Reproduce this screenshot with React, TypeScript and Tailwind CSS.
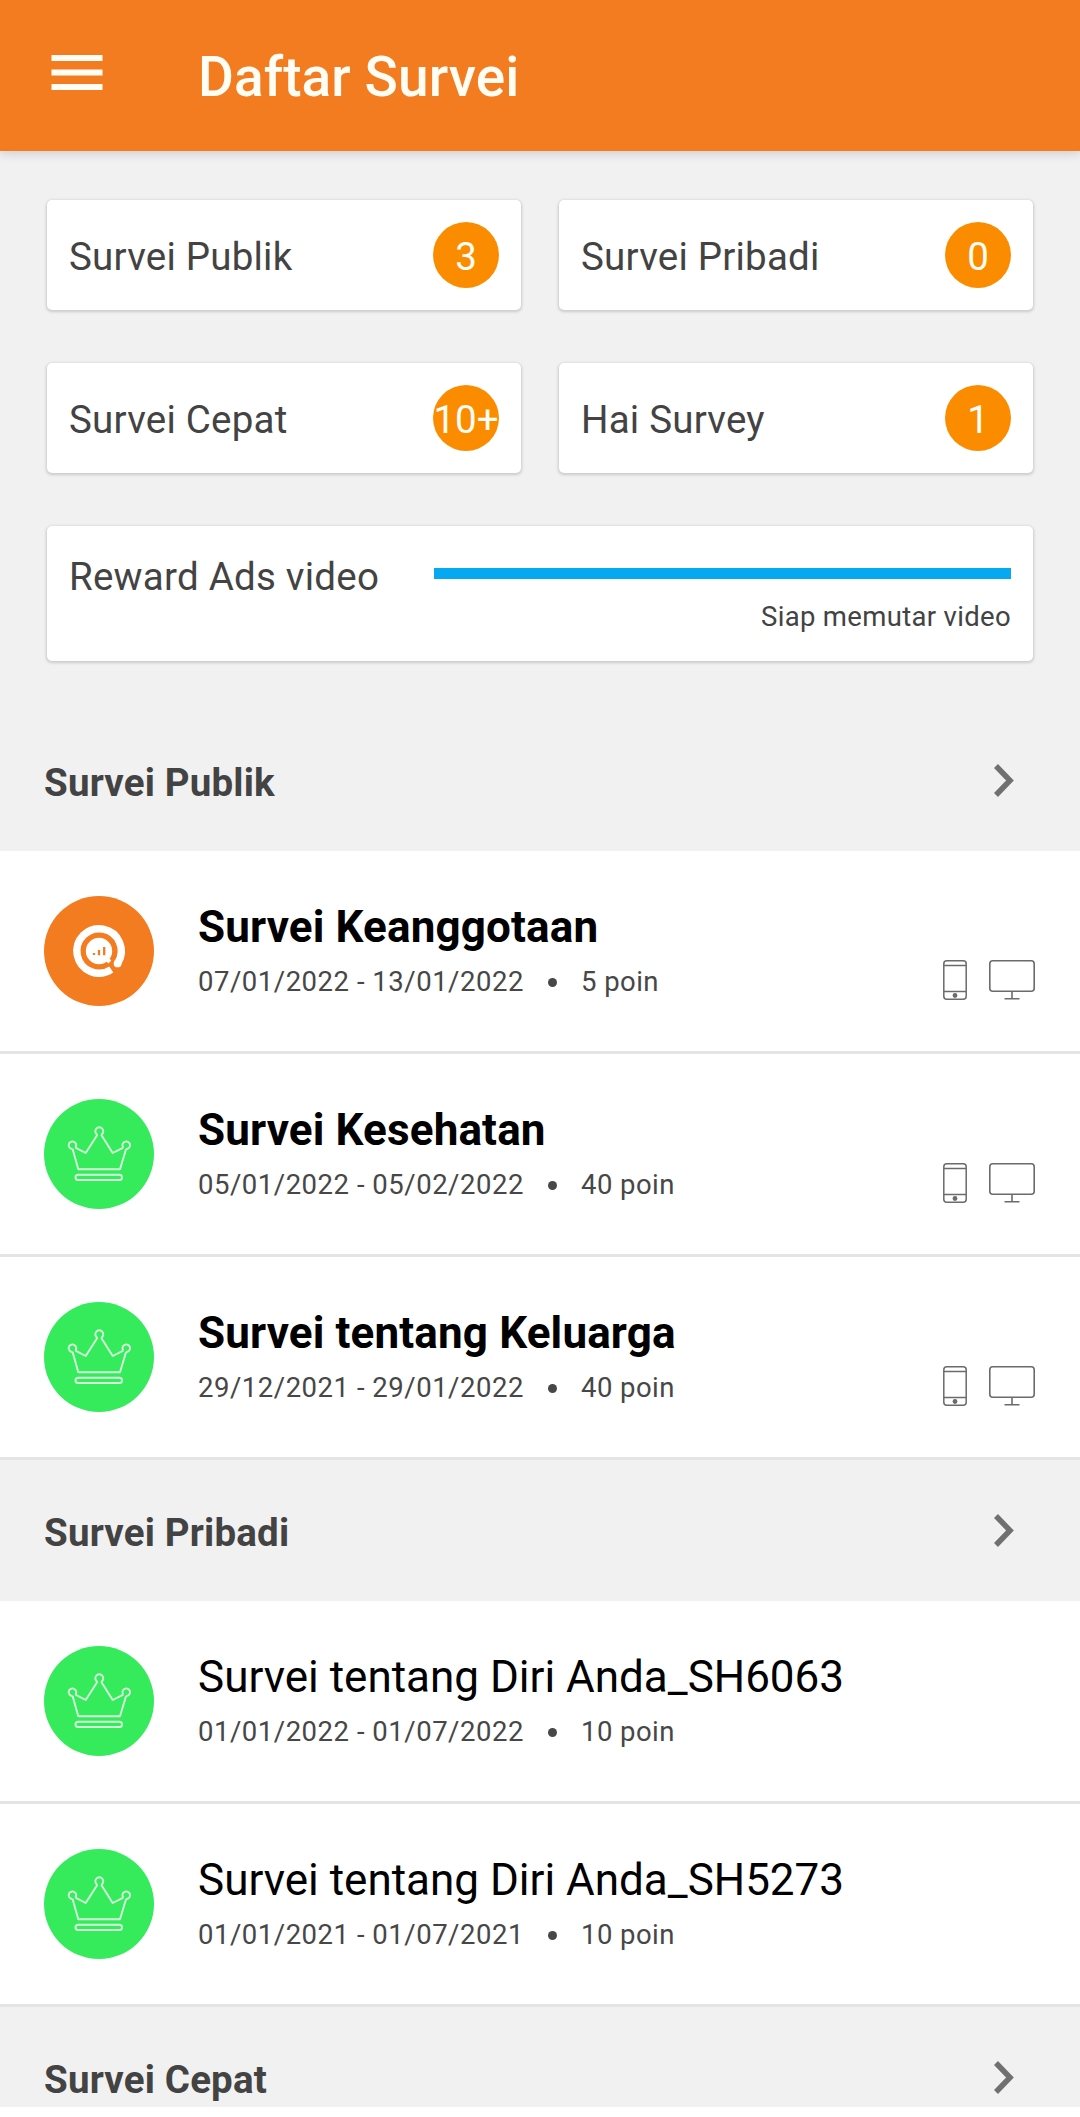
import React from 'react';

type Survey = { title: string; dates: string; points: string; member?: boolean; devices?: boolean };

const counters = [
  { label: 'Survei Publik', count: '3' },
  { label: 'Survei Pribadi', count: '0' },
  { label: 'Survei Cepat', count: '10+' },
  { label: 'Hai Survey', count: '1' },
];

const publicSurveys: Survey[] = [
  { title: 'Survei Keanggotaan', dates: '07/01/2022 - 13/01/2022', points: '5 poin', member: true, devices: true },
  { title: 'Survei Kesehatan', dates: '05/01/2022 - 05/02/2022', points: '40 poin', devices: true },
  { title: 'Survei tentang Keluarga', dates: '29/12/2021 - 29/01/2022', points: '40 poin', devices: true },
];

const privateSurveys: Survey[] = [
  { title: 'Survei tentang Diri Anda_SH6063', dates: '01/01/2022 - 01/07/2022', points: '10 poin' },
  { title: 'Survei tentang Diri Anda_SH5273', dates: '01/01/2021 - 01/07/2021', points: '10 poin' },
];

const cardShadow = 'rounded-[5px] bg-white shadow-[0_1px_3px_1px_rgba(0,0,0,0.16)]';

function MenuIcon() {
  return (
    <svg width="52" height="35" viewBox="0 0 52 35" fill="#fffdf4">
      <rect x="0.5" width="51" height="6" />
      <rect x="0.5" y="14.5" width="51" height="6" />
      <rect x="0.5" y="29" width="51" height="6" />
    </svg>
  );
}

function Chevron() {
  return (
    <svg width="20" height="33" viewBox="0 0 20 33" fill="none" stroke="#707070" strokeWidth="5.5">
      <path d="M2 2 L16 16.5 L2 31" />
    </svg>
  );
}

function CrownBadge() {
  return (
    <svg width="110" height="110" viewBox="0 0 110 110" fill="none" stroke="#d6fbdc" strokeWidth="1.9" strokeLinejoin="round">
      <circle cx="55" cy="55" r="55" fill="#35eb5b" stroke="none" />
      <path d="M53.4 35.8 A4 4 0 1 1 57.2 35.8 M28.6 50 A3.8 3.8 0 1 1 31.4 48.6 M79.3 48.6 A3.8 3.8 0 1 1 82.1 50" />
      <path d="M53.4 35.8 L41.7 54 L31.4 48.6 M28.6 50 L34.3 70.2 H76 L82.1 50 M79.3 48.6 L68.7 54 L57.2 35.8" />
      <rect x="31.5" y="75.8" width="46.5" height="5.2" rx="2.6" />
    </svg>
  );
}

function MemberBadge() {
  return (
    <svg width="110" height="110" viewBox="0 0 110 110" fill="none">
      <circle cx="55" cy="55" r="55" fill="#f47c20" />
      <path d="M67.3 73.5 A22.2 22.2 0 1 1 73.8 66.9" stroke="#fff" strokeWidth="7.4" />
      <circle cx="73.6" cy="67.4" r="3.9" fill="#fff" />
      <circle cx="55" cy="55" r="13.2" fill="#fff" />
      <path d="M62 62 L65.8 66" stroke="#fff" strokeWidth="4" />
      <path d="M50 57 V59 M55 54 V59.3 M60.2 51 V59.3" stroke="#f47c20" strokeWidth="2.3" />
    </svg>
  );
}

function DeviceIcons() {
  return (
    <div className="flex gap-[22px]">
      <svg width="24" height="40" viewBox="0 0 24 40" fill="none" stroke="#6b6b6b" strokeWidth="1.5">
        <rect x="0.8" y="0.8" width="22.4" height="38.4" rx="3" />
        <path d="M1 5.5 H23 M1 31.5 H23" />
        <circle cx="12" cy="35.5" r="2.4" fill="#6b6b6b" stroke="none" />
      </svg>
      <svg width="46" height="40" viewBox="0 0 46 40" fill="none" stroke="#6b6b6b" strokeWidth="1.6">
        <rect x="0.8" y="0.8" width="44.4" height="30.4" rx="3" />
        <path d="M23 31 V38 M15.5 38.7 H30.5" />
      </svg>
    </div>
  );
}

function SectionHeader({ title }: { title: string }) {
  return (
    <div className="flex h-[141px] shrink-0 items-center justify-between pl-[44px] pr-[66px]">
      <h2 className="pt-[4px] text-[38.5px] font-bold leading-[46px] tracking-[0.18px] text-[#434343]">{title}</h2>
      <Chevron />
    </div>
  );
}

function SurveyRow({ survey, bold }: { survey: Survey; bold?: boolean }) {
  return (
    <li className="flex h-[203px] items-start border-b-[3px] border-[#e4e4e4] bg-white pl-[44px] pr-[45px]">
      <div className="mt-[45px] w-[154px] shrink-0">{survey.member ? <MemberBadge /> : <CrownBadge />}</div>
      <div className="flex-1 pt-[50px]">
        <h3 className={`text-[44px] leading-[52px] text-black ${bold ? 'font-bold tracking-[0.14px]' : 'font-normal'}`}>{survey.title}</h3>
        <div className="mt-[11px] flex items-center text-[27.5px] leading-[36px] text-[#474747]">
          <span className="w-[350px] tracking-[0.52px]">{survey.dates}</span>
          <span className="h-[9px] w-[9px] rounded-full bg-[#474747]" />
          <span className="ml-[24px] tracking-[0.45px]">{survey.points}</span>
        </div>
      </div>
      {survey.devices && <div className="mt-[109px]"><DeviceIcons /></div>}
    </li>
  );
}

export default function App() {
  return (
    <div className="flex h-[2117px] w-[1080px] flex-col overflow-hidden bg-white font-['Roboto',sans-serif]">
      <div className="flex h-[2107px] shrink-0 flex-col overflow-hidden bg-[#f1f1f1]">
        <header className="flex h-[151px] shrink-0 items-center bg-[#f47c20] pl-[51px] shadow-[0_2px_10px_rgba(0,0,0,0.16)]">
          <div className="-mt-[6px] w-[147px]"><MenuIcon /></div>
          <h1 className="pt-[3px] text-[55px] font-medium leading-[64px] tracking-[0.08px] text-[#fffdf4]">Daftar Survei</h1>
        </header>
        <div className="flex h-[559px] shrink-0 flex-col px-[47px] pt-[49px]">
          <div className="grid grid-cols-2 gap-x-[38px] gap-y-[53px]">
            {counters.map((c) => (
              <div key={c.label} className={`flex h-[110px] items-center justify-between px-[22px] text-[38.5px] leading-[46px] ${cardShadow}`}>
                <span className="pt-[3px] tracking-[0.22px] text-[#434343]">{c.label}</span>
                <span className="flex h-[66px] w-[66px] items-center justify-center whitespace-nowrap rounded-full bg-[#fb8c00] pt-[3px] text-[#fffdf4]">
                  {c.count}
                </span>
              </div>
            ))}
          </div>
          <div className={`mt-[53px] flex h-[135px] justify-between px-[22px] text-[#434343] ${cardShadow}`}>
            <span className="pt-[28px] text-[38.5px] leading-[46px] tracking-[0.24px]">Reward Ads video</span>
            <div className="flex w-[577px] flex-col pt-[42px]">
              <div className="h-[11px] bg-[#06a9f1]" />
              <span className="mt-[20px] text-right text-[27.5px] leading-[36px] tracking-[0.33px]">Siap memutar video</span>
            </div>
          </div>
        </div>
        <SectionHeader title="Survei Publik" />
        <ul className="shrink-0">{publicSurveys.map((s) => <SurveyRow key={s.title} survey={s} bold />)}</ul>
        <SectionHeader title="Survei Pribadi" />
        <ul className="shrink-0">{privateSurveys.map((s) => <SurveyRow key={s.title} survey={s} />)}</ul>
        <SectionHeader title="Survei Cepat" />
      </div>
    </div>
  );
}
